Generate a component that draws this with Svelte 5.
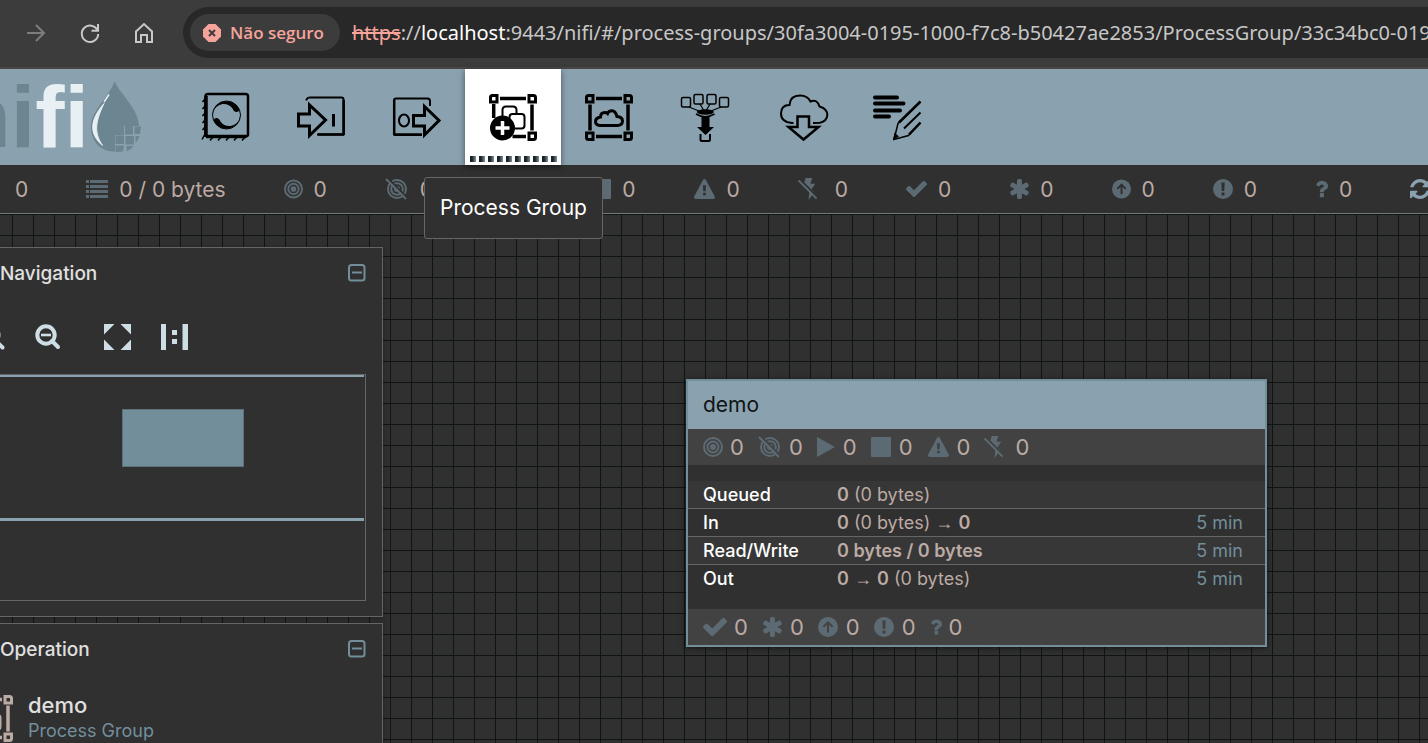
<script>
  const status = [
    { icon: 'threads', w: 22, label: 'Active threads', value: '0' },
    { icon: 'list', w: 22, label: 'Total queued data', value: '0 / 0 bytes' },
    { icon: 'target', w: 19, label: 'Transmitting', value: '0' },
    { icon: 'targetOff', w: 24, label: 'Not transmitting', value: '0' },
    { icon: 'play', w: 18, label: 'Running', value: '0' },
    { icon: 'stop', w: 20, label: 'Stopped', value: '0' },
    { icon: 'warn', w: 22, label: 'Invalid', value: '0' },
    { icon: 'boltOff', w: 26, label: 'Disabled', value: '0' },
    { icon: 'check', w: 21, label: 'Up to date', value: '0' },
    { icon: 'asterisk', w: 20, label: 'Locally modified', value: '0' },
    { icon: 'up', w: 19, label: 'Stale', value: '0' },
    { icon: 'alert', w: 20, label: 'Locally modified and stale', value: '0' },
    { icon: 'question', w: 13, label: 'Sync failure', value: '0' }
  ];

  const components = ['Processor', 'Input Port', 'Output Port', 'Process Group', 'Remote Process Group', 'Funnel', 'Import from Registry', 'Label'];

  const nodeTop = [
    { icon: 'target', w: 20 },
    { icon: 'targetOff', w: 24 },
    { icon: 'play', w: 19 },
    { icon: 'stop', w: 21 },
    { icon: 'warn', w: 23 },
    { icon: 'boltOff', w: 24 }
  ];
  const nodeBottom = [
    { icon: 'check', w: 24 },
    { icon: 'asterisk', w: 21 },
    { icon: 'up', w: 21 },
    { icon: 'alert', w: 21 },
    { icon: 'question', w: 12 }
  ];
</script>

{#snippet glyph(name, w)}
  <span class="glyph" style="width:{w}px">
    {#if name === 'check'}
      <svg viewBox="121 300 1550 1250"><path d="M1671 566q0 40-28 68l-724 724-136 136q-28 28-68 28t-68-28l-136-136-362-362q-28-28-28-68t28-68l136-136q28-28 68-28t68 28l294 295 656-657q28-28 68-28t68 28l136 136q28 28 28 68z" /></svg>
    {:else if name === 'asterisk'}
      <svg viewBox="170 128 1450 1536"><path d="M1546 1050q46 26 59.5 77.5t-12.5 97.5l-64 110q-26 46-77.5 59.5t-97.5-12.5l-266-153v307q0 52-38 90t-90 38h-128q-52 0-90-38t-38-90v-307l-266 153q-46 26-97.5 12.5t-77.5-59.5l-64-110q-26-46-12.5-97.5t59.5-77.5l266-154-266-154q-46-26-59.5-77.5t12.5-97.5l64-110q26-46 77.5-59.5t97.5 12.5l266 153v-307q0-52 38-90t90-38h128q52 0 90 38t38 90v307l266-153q46-26 97.5-12.5t77.5 59.5l64 110q26 46 12.5 97.5t-59.5 77.5l-266 154z" /></svg>
    {:else if name === 'up'}
      <svg viewBox="0 0 20 20"><circle cx="10" cy="10" r="10" /><path class="cut" d="M10 15.500V5.500M5.500 9.800L10 5.300l4.500 4.500" /></svg>
    {:else if name === 'alert'}
      <svg viewBox="0 0 20 20"><circle cx="10" cy="10" r="10" /><path class="hole" d="M8.300 3.500h3.400l-.5 8.500H8.800zM8.500 13.500h3v3h-3z" /></svg>
    {:else if name === 'question'}
      <svg viewBox="386 256 1020 1280"><path d="M1088 1256v240q0 16-12 28t-28 12h-240q-16 0-28-12t-12-28v-240q0-16 12-28t28-12h240q16 0 28 12t12 28zm316-600q0 54-15.500 101t-35 76.500-55 59.500-57.500 43.500-61 35.500q-41 23-68.500 65t-27.500 67q0 17-12 32.500t-28 15.500h-240q-15 0-25.500-18.500t-10.500-37.500v-45q0-83 65-156.500t143-108.500q59-27 84-56t25-76q0-42-46.500-74t-107.500-32q-65 0-108 29-35 25-107 115-13 16-31 16-12 0-25-8l-164-125q-13-10-15.500-25t5.500-28q160-266 464-266 80 0 161 31t146 83 106 127.500 41 158.500z" /></svg>
    {:else if name === 'target'}
      <svg viewBox="0 0 20 20"><circle cx="10" cy="10" r="3" /><g class="ring"><circle cx="10" cy="10" r="5.500" /><circle cx="10" cy="10" r="9" /></g></svg>
    {:else if name === 'targetOff'}
      <svg class="left tall" viewBox="0 0 22 22"><circle cx="12" cy="11" r="3" /><g class="ring"><circle cx="12" cy="11" r="5.800" /><circle cx="12" cy="11" r="9" /></g><path class="cut" d="M2.500 0l20 20" /><path class="slash" d="M1 1l20 20" /></svg>
    {:else if name === 'play'}
      <svg class="left" viewBox="0 0 18 20"><path d="M0 0v20L18 10z" /></svg>
    {:else if name === 'stop'}
      <svg viewBox="0 0 20 20"><rect width="20" height="20" rx="1" /></svg>
    {:else if name === 'warn'}
      <svg viewBox="0 0 23 22"><path d="M11.500 0q1 0 1.600 1l9.600 18q.6 1.200 0 2.100t-1.700.9H2q-1.100 0-1.700-.9t0-2.100L9.900 1q.6-1 1.600-1z" /><path class="hole" d="M9.800 7h3.400l-.4 6.500h-2.600zM10 15h3v3h-3z" /></svg>
    {:else if name === 'boltOff'}
      <svg class="left tall" viewBox="0 0 21 23"><path d="M8 0h7l-2 6h5l-4 6 3 3-6 8 1-9-6-7z" /><path class="cut" d="M1.500 1l20 20" /><path class="slash" d="M.5 2.500l19 19" /></svg>
    {:else if name === 'list'}
      <svg viewBox="0 0 22 18"><path d="M0 0h3v3H0zM0 5h3v3H0zM0 10h3v3H0zM0 15h3v3H0zM4 0h18v3H4zM4 5h18v3H4zM4 10h18v3H4zM4 15h18v3H4z" /></svg>
    {/if}
  </span>
{/snippet}

{#snippet corners(all)}
  <g fill="none" stroke="currentColor" stroke-width="3">
    <path d="M1.500 10V5.500Q1.500 3.500 3.500 3.500H8V10z" />
    <path d="M40 3.500h4.500q2 0 2 2V10H40z" />
    <path d="M40 41h6.500v4.500q0 2-2 2H40z" />
    <path d="M11 6.500h26M43 12.500v26" stroke-width="3.500" />
    {#if all}
      <path d="M1.500 41H8v6.500H3.500q-2 0-2-2z" />
      <path d="M11 44.500h26M5 12.500v26" stroke-width="3.500" />
    {:else}
      <path d="M23.500 44.500H37M4.700 12v14" stroke-width="3.500" />
    {/if}
  </g>
{/snippet}

{#snippet groupArt()}
  {@render corners(false)}
  <g fill="none" stroke="currentColor" stroke-width="2">
    <path d="M13.500 24v-6q0-3.500 3.500-3.500h7q3.500 0 3.500 3.500v3" />
    <path d="M20.500 28v-3q0-3 3-3h9q3 0 3 3v8.500q0 3-3 3H26" />
  </g>
  <circle cx="13.500" cy="36" r="11" fill="currentColor" />
{/snippet}

{#snippet toolIcon(name)}
  <svg class="tool" viewBox="0 0 48 50" width="48" height="50" fill="none" stroke="currentColor" stroke-width="3">
    {#if name === 'Processor'}
      <rect x="4.500" y="2" width="42.500" height="42.500" rx="2.500" stroke-width="2.500" />
      <path d="M5 4v41M5 44.500h40" stroke-width="3.500" />
      <path d="M4 7L1.500 10M4 14L1.500 17M4 21L1.500 24M4 28L1.500 31M4 35L1.500 38M4 42L1 47.500M12 45l-3 3.500M20 45l-3 3.500M28 45l-3 3.500M36 45l-3 3.500M44 45l-3 3.500" stroke-width="1.500" />
      <circle cx="25.500" cy="23" r="14" stroke-width="1" />
      <path d="M11.500 22A14.200 14.200 0 0 1 38 16.500Q38.500 20 35.500 20Q33 20 31.500 16.500Q28 11.500 21.500 12Q13.500 13.500 11.500 22z" fill="currentColor" stroke="none" />
      <path d="M11.500 22A14.200 14.200 0 0 1 38 16.500Q38.500 20 35.500 20Q33 20 31.500 16.500Q28 11.500 21.500 12Q13.500 13.500 11.500 22z" fill="currentColor" stroke="none" transform="rotate(180 25.500 23)" />
    {:else if name === 'Input Port'}
      <path d="M9.500 8.500V7.500Q10.500 5.500 12.500 5.500H44.500Q46.500 5.500 46.500 7.500V42.500H20" stroke-width="2" />
      <path d="M46.700 8v35M21 42.500h26" stroke-width="2.500" />
      <path d="M1.500 22H12.500V13L28.500 28 12.500 43.500V34H1.500z" />
      <path d="M36.500 22v12.500" />
    {:else if name === 'Output Port'}
      <path d="M37 14V9Q37 6.500 34.500 6.500H3Q1 6.500 1 8.500V42.500H29" stroke-width="2" />
      <path d="M1.200 8v35M1 42.700h28" stroke-width="2.500" />
      <ellipse cx="11" cy="28.500" rx="5" ry="6" stroke-width="2" />
      <path d="M20.500 23.500H31.500V14.500L46 28.500 31.500 43V34H20.500z" />
    {:else if name === 'Process Group'}
      {@render groupArt()}
      <path d="M13.500 29v14M6.500 36h14" stroke="#fff" stroke-width="3.500" />
    {:else if name === 'Remote Process Group'}
      {@render corners(true)}
      <path d="M15 33.500Q10.500 33 10.500 29.500T15.500 25Q15.500 20.500 20 20.500 21.500 20.500 22.500 21.500 23.500 18.700 27 18.700T32 24.500Q37.500 25 37.500 29T33 33.500z" />
    {:else if name === 'Funnel'}
      <g stroke-width="1.500">
        <rect x=".5" y="5.500" width="9" height="9.500" rx="1.500" />
        <rect x="13" y="2.500" width="9" height="9.500" rx="1.500" />
        <rect x="26" y="2.500" width="9" height="9.500" rx="1.500" />
        <rect x="38.500" y="5.500" width="9" height="9.500" rx="1.500" />
        <path d="M8 15l10 4M19 12l3.500 6M29 12l-3.500 6M40 15l-10 4" stroke-width="1.200" />
        <path d="M15 22Q24 27.500 33.500 22" />
        <path d="M19.500 42v5.500q0 1.500 1.500 1.500h6.500q1.500 0 1.500-1.500V42" stroke-width="2" />
      </g>
      <ellipse cx="24.300" cy="20" rx="8.500" ry="2.700" fill="currentColor" stroke="none" />
      <path d="M20.500 24h8v11h4.500l-8.500 8-8.500-8h4.500z" fill="currentColor" stroke="none" />
    {:else if name === 'Import from Registry'}
      <g stroke-width="2" transform="translate(3 0)">
        <path d="M13.500 31H12Q1 30 1 21.500T9.500 13Q10 3.500 20 3.500 27.500 3.500 30.500 9.500 37 6.500 39.500 14.500 47.500 17 47.300 23T40 30.700L33 31" />
        <path d="M17.500 24.500h11.500v10.500h9.500L23.500 47.500 8.500 35h9z" stroke-width="2.500" />
      </g>
    {:else}
      <path d="M2 5.500h22M2 11.500h28.500M2 18.500h25M2 24.500h14" stroke-width="4" stroke-linecap="round" />
      <path d="M47.500 10L25 31.500 21 47.500 35.500 43.500 47.500 31" stroke-width="1.500" />
      <path d="M47.500 9.500L26 30.500M47.500 30.500L36 42.500" stroke-width="2.500" />
      <path d="M31 36.500L47.500 20.500" stroke-width="2" />
      <path d="M20 48l1.500-7.500 4.500 4z" fill="currentColor" stroke="none" />
    {/if}
  </svg>
{/snippet}

{#snippet collapse()}
  <button class="collapse" aria-label="Collapse">
    <svg viewBox="0 0 18 18" width="18" height="18" fill="none" stroke="currentColor" stroke-width="2"><rect x="1" y="1" width="15.500" height="15.500" rx="2.500" /><path d="M4 8.500h10" /></svg>
  </button>
{/snippet}

<div class="page">
  <div class="browser">
    <button class="nav dim" aria-label="Forward"><svg viewBox="0 0 20 20" width="20" height="20"><path d="M1 10h17M10 2l8 8-8 8" /></svg></button>
    <button class="nav" aria-label="Reload"><svg viewBox="0 0 20 20" width="20" height="20"><path d="M17.500 7.500A8.200 8.200 0 1 0 18.200 11M18 1v6.800h-6.500" /></svg></button>
    <button class="nav" aria-label="Home"><svg viewBox="0 0 20 22" width="20" height="22"><path d="M2 9.500L10 2l8 7.500V20h-5v-7H7v7H2z" /></svg></button>
    <div class="address">
      <button class="chip">
        <svg viewBox="0 0 18 18" width="18" height="18"><path d="M5.500 0h7L18 5.500v7L12.500 18h-7L0 12.500v-7z" fill="#f6a49b" /><path d="M6 6l6 6M12 6l-6 6" stroke="#3c3c3c" stroke-width="2" /></svg>
        Não seguro
      </button>
      <span class="url"><s>https</s>://<b>localhost</b>:9443/nifi/#/process-groups/30fa3004-0195-1000-f7c8-b50427ae2853/ProcessGroup/33c34bc0-0195</span>
    </div>
  </div>

  <header>
    <div class="brand">
      <span class="word">ni<em>fi</em></span>
      <svg viewBox="0 0 50 74" width="50" height="74">
        <path d="M23.500 1C26 10 48 29 48 46H33v9H24v16.500C9 72 0 61 0 47 0 30 18 18 23.500 1z" fill="#6b8690" />
        <path d="M34 46h8v8.500h-8zM43.500 46.500h6.500l-1 7.500h-5.500zM24.500 55.500h8.500v8.500h-8.500zM34.500 56h8.500v8.500h-8.500zM44.500 56H48.500q-1 4-4 7zM24.500 65.500h8.500l-1 6-7.500.5zM35.500 66h7q-3 4-7 5.500z" fill="#6b8690" />
        <path d="M18 14.500Q15 19 13 22" fill="none" stroke="#e9f0f3" stroke-width="1.500" />
        <path d="M13 23.500C-4 43 .5 56 11.500 65.500 3 53 4 42 13 23.500z" fill="#e9f0f3" stroke="#e9f0f3" />
      </svg>
    </div>
    {#each components as name}
      <button class="component" class:active={name === 'Process Group'} aria-label={name}>
        {@render toolIcon(name)}
        {#if name === 'Process Group'}
          <span class="grip"></span>
        {/if}
      </button>
    {/each}
    <div class="tooltip" role="tooltip">Process Group</div>
  </header>

  <div class="status">
    {#each status as s}
      <span class="stat" title={s.label}>{@render glyph(s.icon, s.w)}<span>{s.value}</span></span>
    {/each}
    <button class="refresh" aria-label="Refresh">
      <svg viewBox="128 128 1536 1536" width="20" height="20"><path d="M1639 1056q0 5-1 7-64 268-268 434.500t-478 166.500q-146 0-282.500-55t-243.500-157l-129 129q-19 19-45 19t-45-19-19-45v-448q0-26 19-45t45-19h448q26 0 45 19t19 45-19 45l-137 137q71 66 161 102t187 36q134 0 250-65t186-179q11-17 53-117 8-23 30-23h192q13 0 22.500 9.500t9.500 22.500zm25-800v448q0 26-19 45t-45 19h-448q-26 0-45-19t-19-45 19-45l138-138q-148-137-349-137-134 0-250 65t-186 179q-11 17-53 117-8 23-30 23h-199q-13 0-22.500-9.500t-9.500-22.500v-7q65-268 270-434.500t480-166.500q146 0 284 55.500t245 156.500l130-129q19-19 45-19t45 19 19 45z" /></svg>
    </button>
  </div>

  <main>
    <div class="panels">
      <section class="panel">
        <div class="panel-head"><h2>Navigation</h2>{@render collapse()}</div>
        <div class="zoom">
          <button aria-label="Zoom in"><svg viewBox="0 0 26 26" width="26" height="26"><g fill="none" stroke="currentColor" stroke-width="4"><circle cx="11" cy="11" r="8.500" /><path d="M17 17l6.500 6.500" stroke-linecap="round" /></g><path d="M6 9.500h10v3H6zM9.500 6h3v10h-3z" /></svg></button>
          <button aria-label="Zoom out"><svg viewBox="0 0 26 26" width="26" height="26"><g fill="none" stroke="currentColor" stroke-width="4"><circle cx="11" cy="11" r="8.700" /><path d="M17 17l6 6" stroke-linecap="round" /></g><path d="M6 9.700h10v2.600H6z" /></svg></button>
          <button class="fit" aria-label="Fit"><svg viewBox="0 0 27 26" width="27" height="26"><path d="M0 0h10.500L0 10.500zM27 0v10.500L16.500 0zM0 26V15.500L10.500 26zM27 26H16.500L27 15.500z" /></svg></button>
          <button aria-label="Actual size"><svg viewBox="0 0 27 26" width="27" height="26"><path d="M0 0h5v26H0zM21.500 0h5.500v26h-5.500zM11 6h5v5h-5zM11 15h5v5h-5z" /></svg></button>
        </div>
        <div class="birdseye">
          <div class="viewport"><div class="mini"></div></div>
        </div>
      </section>

      <section class="panel">
        <div class="panel-head"><h2>Operation</h2>{@render collapse()}</div>
        <div class="context">
          <svg viewBox="0 0 48 50" width="48" height="50">{@render groupArt()}</svg>
          <div><strong>demo</strong><span>Process Group</span></div>
        </div>
      </section>
    </div>

    <article class="node">
      <h3>demo</h3>
      <div class="counts">
        {#each nodeTop as c}
          <span>{@render glyph(c.icon, c.w)}0</span>
        {/each}
      </div>
      <table>
        <tbody>
          <tr><th scope="row">Queued</th><td><b>0</b> (0 bytes)</td><td class="when"></td></tr>
          <tr><th scope="row">In</th><td><b>0</b> (0 bytes) <i>→</i> <b>0</b></td><td class="when">5 min</td></tr>
          <tr><th scope="row">Read/Write</th><td><b>0 bytes / 0 bytes</b></td><td class="when">5 min</td></tr>
          <tr><th scope="row">Out</th><td><b>0</b> <i>→</i> <b>0</b> (0 bytes)</td><td class="when">5 min</td></tr>
        </tbody>
      </table>
      <div class="counts">
        {#each nodeBottom as c}
          <span>{@render glyph(c.icon, c.w)}0</span>
        {/each}
      </div>
    </article>
  </main>
</div>

<style>
  :global(body) {
    margin: 0;
    overflow: hidden;
    background: #303030;
  }
  .page {
    --steel: #8aa2af;
    --steel-deep: #728e9b;
    --muted: #bcaaa4;
    --glyph: #5c6b73;
    --line: #666;
    height: 100vh;
    display: flex;
    flex-direction: column;
    overflow: hidden;
    font-family: Inter, "Liberation Sans", sans-serif;
    font-size: 21px;
    color: #fff;
  }
  button {
    margin: 0;
    padding: 0;
    border: 0;
    background: none;
    color: inherit;
    font: inherit;
    display: flex;
    align-items: center;
    justify-content: center;
    flex: none;
  }
  svg {
    display: block;
    flex: none;
    overflow: visible;
  }

  .browser {
    display: flex;
    align-items: center;
    flex: none;
    height: 51px;
    padding: 7px 0 9px 26px;
    gap: 34px;
    background: #3c3c3c;
    border-bottom: 2px solid #4a4646;
  }
  .nav {
    color: #c8c8c8;
  }
  .nav.dim {
    color: #7d7d7d;
  }
  .nav path {
    fill: none;
    stroke: currentColor;
    stroke-width: 2;
  }
  .address {
    flex: 1;
    min-width: 0;
    height: 51px;
    margin-left: -5px;
    padding-left: 7px;
    display: flex;
    align-items: center;
    gap: 12px;
    background: #282828;
    border-radius: 26px 0 0 26px;
    overflow: hidden;
    font-family: "Noto Sans", "Open Sans", sans-serif;
    font-size: 20px;
    white-space: nowrap;
  }
  .chip {
    height: 37px;
    padding: 0 16px 0 13px;
    gap: 9px;
    border-radius: 19px;
    background: #3c3c3c;
    color: #f6a49b;
    font-family: "Open Sans", sans-serif;
    font-size: 17px;
    font-weight: 600;
  }
  .url {
    color: #c7c7c7;
  }
  .url s {
    color: #f6a49b;
  }
  .url b {
    color: #fff;
    font-weight: 400;
  }

  header {
    position: relative;
    display: flex;
    flex: none;
    height: 96px;
    background: var(--steel);
    color: #000;
  }
  .brand {
    width: 141px;
    padding-right: 36px;
    display: flex;
    align-items: center;
    justify-content: flex-end;
    gap: 2px;
    flex: none;
    overflow: hidden;
  }
  .word {
    font: bold 88px/96px "Liberation Sans", Arial, sans-serif;
    color: #6b8690;
  }
  .word em {
    font-style: normal;
    color: #e9f0f3;
  }
  .component {
    width: 96px;
    height: 96px;
    position: relative;
  }
  .component.active {
    background: #fff;
    box-shadow: 0 2px 6px rgba(0, 0, 0, 0.5);
  }
  .grip {
    position: absolute;
    left: 5px;
    right: 4px;
    bottom: 3px;
    height: 6px;
    background: repeating-linear-gradient(90deg, #1b2226 0, #1b2226 2px, #7d929d 6px, #fff 6px, #fff 9px);
  }
  .tooltip {
    position: absolute;
    z-index: 5;
    left: 424px;
    top: 108px;
    box-sizing: border-box;
    padding: 0 15px;
    line-height: 60px;
    border: 1px solid var(--line);
    border-radius: 3px;
    background: #303030;
    color: #fff;
    white-space: nowrap;
  }

  .status {
    display: flex;
    align-items: center;
    flex: none;
    height: 48px;
    gap: 58px;
    margin-left: -18px;
    background: #303030;
    border-bottom: 1px solid #707a78;
    color: var(--muted);
    white-space: nowrap;
    --under: #303030;
  }
  .stat {
    display: flex;
    align-items: center;
    gap: 11px;
    flex: none;
  }
  .refresh {
    color: var(--steel);
    fill: currentColor;
  }
  .glyph {
    display: flex;
    align-items: center;
    justify-content: center;
    height: 21px;
    flex: none;
    color: var(--glyph);
    fill: currentColor;
  }
  .glyph svg {
    max-width: 100%;
    height: 20px;
    flex: 0 1 auto;
  }
  .glyph svg.left {
    margin-right: auto;
  }
  .glyph svg.tall {
    height: 22px;
  }
  .glyph .ring {
    fill: none;
    stroke: currentColor;
    stroke-width: 2;
  }
  .glyph .slash {
    fill: none;
    stroke: currentColor;
    stroke-width: 2;
  }
  .glyph .cut {
    fill: none;
    stroke: var(--under);
    stroke-width: 2;
  }
  .glyph .hole {
    fill: var(--under);
  }

  main {
    position: relative;
    flex: 1;
    min-height: 0;
    background-color: #303030;
    background-image: linear-gradient(90deg, #0f1515 1px, transparent 1px), linear-gradient(#0f1515 1px, transparent 1px);
    background-size: 21px 21px;
    background-position: 12px 0;
  }
  .panels {
    position: absolute;
    left: 0;
    top: 33px;
    width: 383px;
    display: flex;
    flex-direction: column;
    gap: 6px;
  }
  .panel {
    padding: 0 16px 15px 0;
    border: 1px solid var(--line);
    border-left: 0;
    background: #303030;
    box-shadow: 0 1px 6px rgba(0, 0, 0, 0.3);
  }
  .panel-head {
    display: flex;
    align-items: center;
    justify-content: space-between;
    height: 50px;
  }
  .panel-head h2 {
    margin: 0;
    font-size: 19px;
    font-weight: 500;
    color: #e0e0e0;
  }
  .collapse {
    color: var(--steel-deep);
  }
  .zoom {
    display: flex;
    align-items: center;
    height: 74px;
    padding-top: 2px;
    gap: 30px;
    margin-left: -21px;
    color: #cfdde5;
    fill: currentColor;
  }
  .fit {
    margin-left: 13px;
  }
  .birdseye {
    height: 225px;
    border: 1px solid var(--line);
    border-left: 0;
  }
  .viewport {
    height: 141px;
    margin-right: 1px;
    border-top: 2px solid var(--steel);
    border-bottom: 3px solid var(--steel);
  }
  .mini {
    width: 33%;
    height: 56px;
    margin: 32px 0 0 122px;
    border: 1px solid #5d717b;
    background: var(--steel-deep);
  }
  .context {
    display: flex;
    align-items: center;
    gap: 15px;
    margin: 18px 0 0 -35px;
    color: var(--muted);
  }
  .context div {
    display: flex;
    flex-direction: column;
    line-height: 26px;
  }
  .context strong {
    font-size: 22px;
    font-weight: 500;
    color: #e0e0e0;
  }
  .context span {
    font-size: 18px;
    color: var(--steel-deep);
  }

  .node {
    position: absolute;
    left: 686px;
    top: 165px;
    width: 577px;
    border: 2px solid var(--steel-deep);
    background: #303030;
    box-shadow: 0 1px 6px rgba(0, 0, 0, 0.6);
  }
  .node h3 {
    margin: 0;
    padding-left: 15px;
    font-size: 21px;
    font-weight: 400;
    line-height: 48px;
    background: var(--steel);
    color: #101414;
  }
  .counts {
    display: flex;
    align-items: center;
    height: 36px;
    padding-left: 15px;
    gap: 14px;
    background: #424242;
    color: var(--muted);
    font-size: 22px;
    --under: #424242;
  }
  .counts > span {
    display: flex;
    align-items: center;
    gap: 7px;
  }
  table {
    width: 100%;
    margin: 16px 0 17px;
    border-collapse: collapse;
    font-size: 18px;
    line-height: 27px;
    color: var(--muted);
  }
  tr:nth-child(odd) {
    background: #373737;
  }
  tr + tr {
    border-top: 1px solid var(--line);
  }
  th {
    width: 149px;
    padding: 0 0 0 15px;
    box-sizing: border-box;
    text-align: left;
    font-weight: 500;
    color: #fff;
  }
  th,
  td {
    height: 27px;
  }
  td {
    padding: 0;
  }
  td b {
    font-weight: 600;
  }
  td i {
    font: normal 18px/20px "Liberation Sans", sans-serif;
  }
  .when {
    padding-right: 22px;
    text-align: right;
    color: var(--steel-deep);
  }
</style>
